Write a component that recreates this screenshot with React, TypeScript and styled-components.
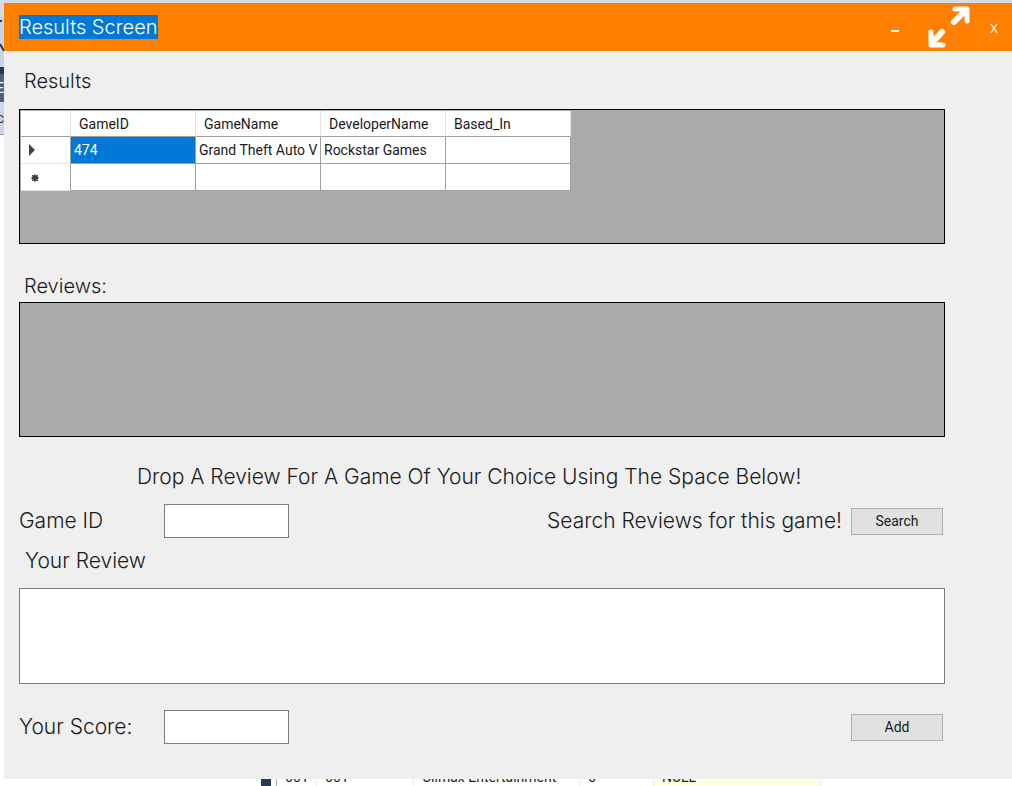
import React from "react";
import styled, { createGlobalStyle } from "styled-components";

const display = `Inter, "Liberation Sans", sans-serif`;
const ui = `Roboto, "Liberation Sans", sans-serif`;

const GlobalStyle = createGlobalStyle`
  * { box-sizing: border-box; }
  body { margin: 0; background: #fff; color: #1a1a1a; font: 14px/16px ${ui}; }
  button, input, textarea { font: inherit; color: inherit; border-radius: 0; }
`;

const Desktop = styled.div`
  display: grid;
  grid-template-columns: 4px minmax(0, 1fr);
  grid-template-rows: 3px auto 7px;
`;

const TopStrip = styled.div`
  grid-column: 1 / -1;
  background: #d6dbe9;
`;

const SideStrip = styled.div`
  overflow: hidden;
  font-size: 14px;
`;

const SideBlock = styled.div<{ $height: number; $color: string; $text?: string }>`
  display: flex;
  align-items: center;
  justify-content: flex-end;
  height: ${(p) => p.$height}px;
  background: ${(p) => p.$color};
  color: ${(p) => p.$text ?? "#333"};
`;

const Window = styled.main`
  background: #efefef;
  font: 300 20px/24px ${display};
`;

const TitleBar = styled.header`
  display: flex;
  align-items: center;
  height: 48px;
  padding: 0 0 0 15px;
  background: #ff8000;
  color: #fff;
`;

const Title = styled.h1`
  margin: 0 auto 0 0;
  background: #0078d7;
  font: inherit;
`;

const CaptionButton = styled.button<{ $width: number }>`
  display: flex;
  align-items: center;
  justify-content: center;
  width: ${(p) => p.$width}px;
  height: 44px;
  padding: 0;
  border: 0;
  background: none;
  color: #fff;
  font-size: 16px;
`;

const Content = styled.div`
  display: flex;
  flex-direction: column;
  padding: 18px 67px 35px 15px;
`;

const Heading = styled.h2<{ $gap: number }>`
  margin: 0 0 ${(p) => p.$gap}px;
  padding-left: 5px;
  font: inherit;
`;

const GridPanel = styled.div<{ $after: number }>`
  height: 135px;
  margin-bottom: ${(p) => p.$after}px;
  padding: 1px;
  border: 1px solid #000;
  background: #ababab;
  overflow: auto;
`;

const DataTable = styled.table`
  table-layout: fixed;
  width: 550px;
  border-collapse: separate;
  border-spacing: 0;
  background: #fff;
  font: 14px/16px ${ui};
`;

const HeadCell = styled.th<{ $width: number }>`
  width: ${(p) => p.$width}px;
  height: 26px;
  padding: 0 8px;
  border-right: 1px solid #e2e2e2;
  border-bottom: 1px solid #a0a0a0;
  text-align: left;
  font-weight: 400;
`;

const RowHead = styled.th`
  height: 27px;
  padding: 0 0 0 7px;
  border-right: 1px solid #a0a0a0;
  border-bottom: 1px solid #e2e2e2;
  text-align: left;
`;

const Cell = styled.td<{ $selected?: boolean }>`
  height: 27px;
  padding: 0 3px;
  border-right: 1px solid #a0a0a0;
  border-bottom: 1px solid #a0a0a0;
  background: ${(p) => (p.$selected ? "#0078d7" : "#fff")};
  color: ${(p) => (p.$selected ? "#fff" : "inherit")};
  white-space: nowrap;
`;

const Mark = styled.svg`
  display: block;
`;

const Prompt = styled.p`
  margin: 0 0 15px;
  padding-left: 118px;
  font-size: 21px;
`;

const FieldRow = styled.div`
  display: flex;
  align-items: center;
  height: 34px;
`;

const FieldLabel = styled.label`
  width: 145px;
  font-size: 21px;
`;

const TextBox = styled.input`
  width: 125px;
  height: 34px;
  margin-right: auto;
  padding: 4px;
  border: 1px solid #7a7a7a;
  background: #fff;
`;

const SearchHint = styled.span`
  font-size: 21px;
`;

const ReviewLabel = styled.label`
  margin: 11px 0 15px;
  padding-left: 6px;
  font-size: 21px;
`;

const ReviewBox = styled.textarea`
  display: block;
  width: 100%;
  height: 96px;
  margin-bottom: 26px;
  padding: 4px;
  border: 1px solid #7a7a7a;
  background: #fff;
  resize: none;
`;

const PushButton = styled.button`
  width: 92px;
  height: 27px;
  margin: 0 2px 0 9px;
  padding: 0;
  border: 1px solid #adadad;
  background: #e1e1e1;
  font: 14px/16px ${ui};
`;

const BottomStrip = styled.div`
  grid-column: 1 / -1;
  display: flex;
  align-items: flex-end;
  height: 7px;
  padding-left: 261px;
  overflow: hidden;
`;

const Splitter = styled.div`
  width: 16px;
  height: 7px;
  border-left: 10px solid #293955;
  border-right: 1px solid #b0b0b0;
`;

const BackCell = styled.div<{ $width: number; $empty?: boolean }>`
  flex: none;
  width: ${(p) => p.$width}px;
  height: 18px;
  padding-left: 8px;
  border-right: 1px solid #ececec;
  background: ${(p) => (p.$empty ? "#ffffe1" : "#fff")};
  line-height: 18px;
  white-space: nowrap;
`;

const columns = ["GameID", "GameName", "DeveloperName", "Based_In"];

export default function App() {
  return (
    <>
      <GlobalStyle />
      <Desktop>
        <TopStrip />
        <SideStrip aria-hidden="true">
          <SideBlock $height={14} $color="#d6dbe9" />
          <SideBlock $height={50} $color="#c9d3e8">
            <svg width="4" height="50" viewBox="0 0 4 50" fill="none" stroke="#1e3a66" strokeWidth="2">
              <path d="M0 4H2M0 27L4 34" />
            </svg>
          </SideBlock>
          <SideBlock $height={7} $color="#293955" />
          <SideBlock $height={28} $color="#4d6082" $text="#fff">E</SideBlock>
          <SideBlock $height={32} $color="#cfd6e5">c</SideBlock>
          <SideBlock $height={1} $color="#8e9bbc" />
        </SideStrip>
        <Window>
          <TitleBar>
            <Title>Results Screen</Title>
            <CaptionButton $width={46} aria-label="Minimize">
              <svg width="10" height="12" viewBox="0 0 10 12">
                <path d="M1 10H9" stroke="#fff" strokeWidth="2" />
              </svg>
            </CaptionButton>
            <CaptionButton $width={58} aria-label="Maximize">
              <svg width="48" height="44" viewBox="0 0 48 44" fill="none" stroke="#fff" strokeLinecap="round" strokeLinejoin="round">
                <path d="M31 17L42 6M19 27L9 38" strokeWidth="6" />
                <path d="M32 4H44V16M8 27V40H20" strokeWidth="5" />
              </svg>
            </CaptionButton>
            <CaptionButton $width={36} aria-label="Close">x</CaptionButton>
          </TitleBar>
          <Content>
            <Heading $gap={16}>Results</Heading>
            <GridPanel $after={30}>
              <DataTable>
                <thead>
                  <tr>
                    <HeadCell $width={50} aria-label="Row" />
                    {columns.map((c) => (
                      <HeadCell key={c} $width={125} scope="col">{c}</HeadCell>
                    ))}
                  </tr>
                </thead>
                <tbody>
                  <tr>
                    <RowHead scope="row" aria-label="Current row">
                      <Mark width="8" height="12" viewBox="0 0 8 12">
                        <path d="M1 0L7 6L1 12Z" fill="#404040" />
                      </Mark>
                    </RowHead>
                    <Cell $selected>474</Cell>
                    <Cell>Grand Theft Auto V</Cell>
                    <Cell>Rockstar Games</Cell>
                    <Cell />
                  </tr>
                  <tr>
                    <RowHead scope="row" aria-label="New row">
                      <Mark width="14" height="10" viewBox="0 0 14 10">
                        <circle cx="7" cy="6" r="3" fill="#404040" />
                        <path d="M7 2V10M3 6H11M4 3L10 9M10 3L4 9" stroke="#404040" />
                      </Mark>
                    </RowHead>
                    <Cell />
                    <Cell />
                    <Cell />
                    <Cell />
                  </tr>
                </tbody>
              </DataTable>
            </GridPanel>
            <Heading $gap={4}>Reviews:</Heading>
            <GridPanel $after={28} />
            <Prompt>Drop A Review For A Game Of Your Choice Using The Space Below!</Prompt>
            <FieldRow>
              <FieldLabel htmlFor="game-id">Game ID</FieldLabel>
              <TextBox id="game-id" type="text" />
              <SearchHint>Search Reviews for this game!</SearchHint>
              <PushButton type="button">Search</PushButton>
            </FieldRow>
            <ReviewLabel htmlFor="review">Your Review</ReviewLabel>
            <ReviewBox id="review" />
            <FieldRow>
              <FieldLabel htmlFor="score">Your Score:</FieldLabel>
              <TextBox id="score" type="text" />
              <PushButton type="button">Add</PushButton>
            </FieldRow>
          </Content>
        </Window>
        <BottomStrip aria-hidden="true">
          <Splitter />
          <BackCell $width={40}>661</BackCell>
          <BackCell $width={97}>661</BackCell>
          <BackCell $width={166}>Climax Entertainment</BackCell>
          <BackCell $width={74}>6</BackCell>
          <BackCell $width={167} $empty>NULL</BackCell>
        </BottomStrip>
      </Desktop>
    </>
  );
}
